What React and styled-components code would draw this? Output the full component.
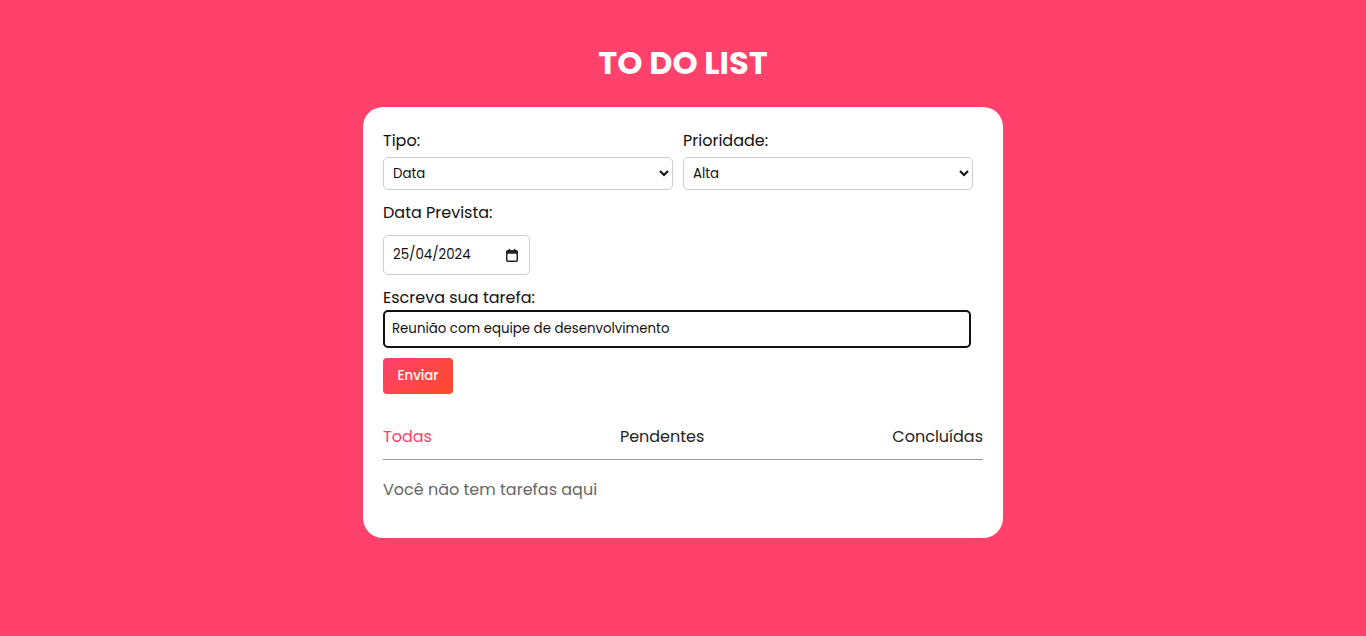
import React, { useState } from "react";
import styled, { createGlobalStyle } from "styled-components";

const GlobalStyle = createGlobalStyle`
  * { box-sizing: border-box; }
  html, body { margin: 0; padding: 0; }
  body {
    background: #ff416c;
    font-family: "Poppins", "Open Sans", "Noto Sans", sans-serif;
    color: #111;
  }
`;

const Page = styled.div`
  min-height: 636px;
  padding-top: 39px;
  display: flex;
  flex-direction: column;
  align-items: center;
`;

const Title = styled.h1`
  margin: 0 0 20px;
  font-size: 32px;
  line-height: 48px;
  font-weight: 700;
  color: #fff;
`;

const Card = styled.div`
  width: 640px;
  background: #fff;
  border-radius: 20px;
  padding: 20px;
`;

const Row = styled.div`
  display: grid;
  grid-template-columns: 300px 300px;
`;

const Field = styled.div`
  display: flex;
  flex-direction: column;
  align-items: flex-start;
`;

const Label = styled.label`
  font-size: 16px;
  line-height: 24px;
  color: #111;
  margin-top: ${(p) => p.$mt || 0}px;
  margin-bottom: ${(p) => p.$mb || 0}px;
`;

const Select = styled.select`
  width: 290px;
  height: 33px;
  border: 1px solid #cfcfcf;
  border-radius: 5px;
  padding: 0 5px;
  font-family: inherit;
  font-size: 13.333px;
  color: #111;
  background: #fff;
`;

const DateBox = styled.div`
  width: 147px;
  height: 40px;
  border: 1px solid #cfcfcf;
  border-radius: 5px;
  padding: 0 11px 0 9px;
  display: flex;
  align-items: center;
  justify-content: space-between;
  background: #fff;
`;

const DateText = styled.input`
  width: 90px;
  border: none;
  outline: none;
  padding: 0;
  font-family: inherit;
  font-size: 13.333px;
  color: #111;
  background: transparent;
`;

const TextInput = styled.input`
  width: 588px;
  height: 38px;
  border: 2px solid #111;
  border-radius: 5px;
  padding: 0 7px;
  font-family: inherit;
  font-size: 13.333px;
  color: #111;
  outline: none;
`;

const Button = styled.button`
  margin-top: 10px;
  width: 70px;
  height: 36px;
  border: none;
  border-radius: 4px;
  background: linear-gradient(135deg, #ff416c, #ff4b2b);
  color: #fff;
  font-family: inherit;
  font-size: 13.333px;
  font-weight: 500;
  cursor: pointer;
`;

const Tabs = styled.div`
  margin-top: 31px;
  display: flex;
  justify-content: space-between;
  padding-bottom: 10px;
  border-bottom: 1px solid #999;
`;

const Tab = styled.span`
  font-size: 16px;
  line-height: 24px;
  color: ${(p) => (p.$active ? "#ff416c" : "#222")};
  cursor: pointer;
`;

const Empty = styled.p`
  margin: 18px 0 16px;
  font-size: 16px;
  line-height: 24px;
  color: #666;
`;

const CalendarIcon = () => (
  <svg width="12" height="13" viewBox="0 0 12 13" aria-hidden="true">
    <rect x="2.5" y="0" width="1.6" height="2.5" fill="#222" />
    <rect x="7.9" y="0" width="1.6" height="2.5" fill="#222" />
    <rect x="0.75" y="1.75" width="10.5" height="10.5" rx="1" fill="none" stroke="#222" strokeWidth="1.5" />
    <rect x="0.75" y="1.75" width="10.5" height="3" fill="#222" />
  </svg>
);

export default function App() {
  const [tab, setTab] = useState("Todas");
  return (
    <>
      <GlobalStyle />
      <Page>
        <Title>TO DO LIST</Title>
        <Card>
          <Row>
            <Field>
              <Label $mt={2} $mb={4}>Tipo:</Label>
              <Select defaultValue="Data">
                <option>Data</option>
                <option>Prioridade</option>
              </Select>
            </Field>
            <Field>
              <Label $mt={2} $mb={4}>Prioridade:</Label>
              <Select defaultValue="Alta">
                <option>Alta</option>
                <option>Média</option>
                <option>Baixa</option>
              </Select>
            </Field>
          </Row>
          <Field>
            <Label $mt={11} $mb={10}>Data Prevista:</Label>
            <DateBox>
              <DateText type="text" defaultValue="25/04/2024" />
              <CalendarIcon />
            </DateBox>
            <Label $mt={11} $mb={0}>Escreva sua tarefa:</Label>
            <TextInput type="text" defaultValue="Reunião com equipe de desenvolvimento" />
            <Button>Enviar</Button>
          </Field>
          <Tabs>
            {["Todas", "Pendentes", "Concluídas"].map((t) => (
              <Tab key={t} $active={tab === t} onClick={() => setTab(t)}>
                {t}
              </Tab>
            ))}
          </Tabs>
          <Empty>Você não tem tarefas aqui</Empty>
        </Card>
      </Page>
    </>
  );
}
